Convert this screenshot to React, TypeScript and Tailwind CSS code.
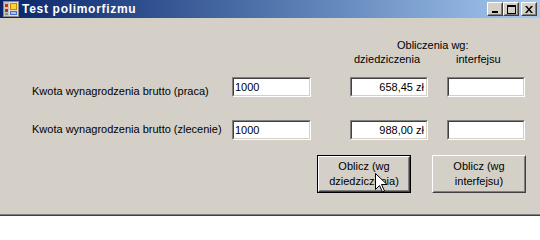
import React from "react";

const sans = { fontFamily: '"Liberation Sans", Arial, sans-serif' };

function Sunken({ value, right, className }: { value?: string; right?: boolean; className?: string }) {
  return (
    <div className={`h-[20px] border border-t-[#808080] border-l-[#808080] border-b-white border-r-white ${className ?? ""}`}>
      <div className="h-full border border-t-[#404040] border-l-[#404040] border-b-[#d4d0c8] border-r-[#d4d0c8] bg-white">
        <div className={`px-[1px] text-[11px] leading-[16px] text-black ${right ? "text-right pr-[2px]" : ""}`}>{value}</div>
      </div>
    </div>
  );
}

function Raised({ lines, isDefault, className }: { lines: string[]; isDefault?: boolean; className?: string }) {
  const body = (
    <div className="h-full border border-t-white border-l-white border-b-[#404040] border-r-[#404040]">
      <div className="h-full border border-t-[#d4d0c8] border-l-[#d4d0c8] border-b-[#808080] border-r-[#808080] flex flex-col items-center justify-center text-[11px] leading-[15px] text-black">
        {lines.map((l) => (
          <span key={l}>{l}</span>
        ))}
      </div>
    </div>
  );
  return (
    <div className={`h-[38px] w-[94px] ${isDefault ? "border border-black" : ""} ${className ?? ""}`}>{body}</div>
  );
}

function CaptionButton({ children, className }: { children: React.ReactNode; className?: string }) {
  return (
    <div className={`h-[14px] w-[16px] bg-[#d4d0c8] border border-t-white border-l-white border-b-[#404040] border-r-[#404040] ${className ?? ""}`}>
      <div className="h-full border border-t-[#d4d0c8] border-l-[#d4d0c8] border-b-[#808080] border-r-[#808080] flex items-center justify-center">
        {children}
      </div>
    </div>
  );
}

// WinForms default form icon
function AppIcon() {
  return (
    <svg width="16" height="16" viewBox="0 0 16 16" shapeRendering="crispEdges">
      <rect x="0" y="0" width="16" height="16" fill="#8c8c8c" />
      <rect x="1" y="1" width="14" height="14" fill="#e0ddd6" />
      <rect x="1" y="1" width="5" height="14" fill="#c8c4bc" />
      <rect x="2" y="3" width="3" height="3" fill="#d42a1e" />
      <rect x="2" y="8" width="3" height="3" fill="#b03020" />
      <rect x="2" y="12" width="3" height="2" fill="#909090" />
      <rect x="7" y="2" width="7" height="7" fill="#c88a00" />
      <rect x="8" y="3" width="5" height="5" fill="#ffd23a" />
      <rect x="7" y="10" width="7" height="4" fill="#4a6ec8" />
      <rect x="8" y="11" width="5" height="2" fill="#a8c0f0" />
    </svg>
  );
}

export default function App() {
  return (
    <div className="w-[540px] h-[216px] bg-[#d4d0c8] flex flex-col overflow-hidden relative" style={sans}>
      {/* title bar */}
      <div className="h-[18px] flex items-center bg-gradient-to-r from-[#0a246a] to-[#a6caf0] pl-[3px] pr-[3px]">
        <AppIcon />
        <span className="ml-[3px] text-white font-bold text-[12px] leading-[14px] tracking-[0.7px]">Test polimorfizmu</span>
        <div className="ml-auto flex items-center">
          <CaptionButton>
            <svg width="8" height="7" viewBox="0 0 8 7">
              <rect x="1" y="5" width="6" height="2" fill="black" />
            </svg>
          </CaptionButton>
          <CaptionButton>
            <svg width="9" height="9" viewBox="0 0 9 9">
              <rect x="0.5" y="1" width="8" height="7.5" fill="none" stroke="black" />
              <rect x="0" y="0" width="9" height="2" fill="black" />
            </svg>
          </CaptionButton>
          <CaptionButton className="ml-[2px]">
            <svg width="8" height="7" viewBox="0 0 8 7">
              <path d="M0 0h2l2 2.5 2-2.5h2l-3 3.5 3 3.5h-2l-2-2.5-2 2.5h-2l3-3.5z" fill="black" />
            </svg>
          </CaptionButton>
        </div>
      </div>

      {/* form */}
      <div className="flex-1 flex flex-col pl-[32px] border-b border-b-[#404040] shadow-[inset_0_-1px_0_#808080]">
        <div className="mt-[21px] ml-[365px] text-[11px] leading-[13px] text-black">Obliczenia wg:</div>
        <div className="mt-[1px] ml-[322px] flex text-[11px] leading-[13px] text-black">
          <span>dziedziczenia</span>
          <span className="ml-[36px]">interfejsu</span>
        </div>

        <div className="mt-[11px] flex items-start">
          <span className="w-[200px] mt-[8px] text-[11px] leading-[13px] text-black">Kwota wynagrodzenia brutto (praca)</span>
          <Sunken className="w-[79px]" value="1000" />
          <Sunken className="w-[78px] ml-[39px]" value="658,45 zł" right />
          <Sunken className="w-[78px] ml-[19px]" />
        </div>

        <div className="mt-[22px] flex items-start">
          <span className="w-[200px] mt-[3px] text-[11px] leading-[13px] text-black">Kwota wynagrodzenia brutto (zlecenie)</span>
          <Sunken className="w-[79px]" value="1000" />
          <Sunken className="w-[78px] ml-[39px]" value="988,00 zł" right />
          <Sunken className="w-[78px] ml-[19px]" />
        </div>

        <div className="mt-[15px] ml-[285px] flex">
          <div className="relative">
            <Raised lines={["Oblicz (wg", "dziedziczenia)"]} isDefault />
            <svg className="absolute left-[58px] top-[18px]" width="12" height="20" viewBox="0 0 12 20">
              <path d="M0.5 0.5v16l4-4 3 6.5 2-1-3-6.5h5.5z" fill="white" stroke="black" strokeWidth="1" />
            </svg>
          </div>
          <Raised className="ml-[21px]" lines={["Oblicz (wg", "interfejsu)"]} />
        </div>
      </div>
    </div>
  );
}
